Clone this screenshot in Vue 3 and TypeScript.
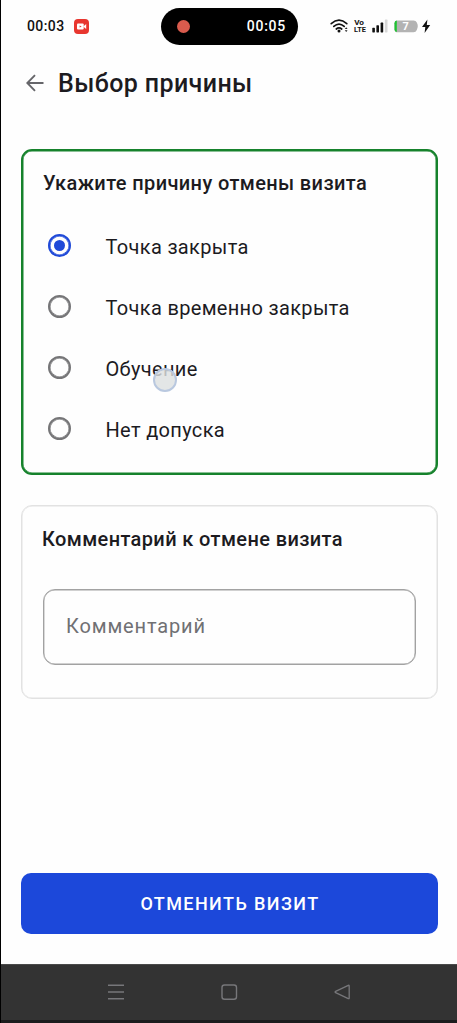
<script setup lang="ts">
import { ref } from 'vue'

const reasons: string[] = ['Точка закрыта', 'Точка временно закрыта', 'Обучение', 'Нет допуска']
const selected = ref<number>(0)
const comment = ref<string>('')
</script>

<template>
  <div class="phone">
    <header class="status">
      <span class="clock">00:03</span>
      <svg class="rec" width="15" height="15" viewBox="0 0 15 15">
        <rect width="15" height="15" rx="4" fill="#e8362f" />
        <rect x="3" y="4.5" width="6.7" height="6" rx="1" fill="#fff" />
        <path d="M9.3 7.5 12.2 5v5z" fill="#fff" />
        <path d="M5.6 6.4v2.2L7.6 7.5z" fill="#e8362f" />
      </svg>
      <div class="island">
        <i class="dot"></i>
        <span>00:05</span>
      </div>
      <svg class="system" width="103" height="18" viewBox="0 0 103 18">
        <g fill="none" stroke="#111" stroke-width="1.7" stroke-linecap="round">
          <path d="M1.2 6.6Q9 -0.2 16.8 6.6" />
          <path d="M3.8 9.4Q9 4.8 14.2 9.4" />
          <path d="M6.3 12Q9 9.7 11.7 12" />
        </g>
        <circle cx="9" cy="14" r="1.5" fill="#111" />
        <path d="M14.8 12.1l1.4-1.8 1.4 1.8zM14.8 13.2l1.4 1.8 1.4-1.8z" fill="#222" />
        <text x="24.2" y="7.6" class="volte" textLength="9.8" lengthAdjust="spacingAndGlyphs">Vo</text>
        <text x="24" y="15.3" class="volte" textLength="11.8" lengthAdjust="spacingAndGlyphs">LTE</text>
        <g fill="#111">
          <rect x="42.3" y="10.8" width="2.6" height="4.6" rx=".6" />
          <rect x="46.4" y="8.2" width="2.6" height="7.2" rx=".6" />
          <rect x="50.6" y="5.6" width="2.6" height="9.8" rx=".6" />
        </g>
        <rect x="54.9" y="2.6" width="2.6" height="12.8" rx=".6" fill="#d8d8d8" />
        <path d="M67.5 3.4H83.5Q86 3.4 86.8 5.6L87.6 7.6Q88 9.4 87.6 10.6L86.8 13Q86 15.2 83.5 15.2H67.5Q64.5 15.2 64.5 12.4V6.2Q64.5 3.4 67.5 3.4Z" fill="#b3b3b3" />
        <path d="M66.8 3.5V15.1Q64.5 14.7 64.5 12.4V6.2Q64.5 3.9 66.8 3.5Z" fill="#1fc332" />
        <text x="75.7" y="13.2" class="charge">7</text>
        <path d="M97.4 2.4 92 10H95.3L94.6 16 100.2 8H96.8Z" fill="#111" />
      </svg>
    </header>

    <div class="title">
      <svg width="18" height="18" viewBox="0 0 18 18" fill="none" stroke="#66666a" stroke-width="1.9">
        <path d="M17.5 9H1.5M9 1.2 1.3 9 9 16.8" />
      </svg>
      <h1>Выбор причины</h1>
    </div>

    <main>
      <section class="card reasons">
        <h2>Укажите причину отмены визита</h2>
        <ul>
          <li v-for="(reason, i) in reasons" :key="reason" @click="selected = i">
            <i class="radio" :class="{ on: selected === i }"></i>
            <span class="label">{{ reason }}</span>
          </li>
        </ul>
        <i class="touch"></i>
      </section>

      <section class="card note">
        <h2>Комментарий к отмене визита</h2>
        <input v-model="comment" type="text" placeholder="Комментарий" />
      </section>
    </main>

    <button class="submit">ОТМЕНИТЬ ВИЗИТ</button>

    <nav>
      <svg width="18" height="18" viewBox="0 0 18 18" stroke="#77777a" stroke-width="1.5">
        <path d="M1 2.2H17M1 9H17M1 15.8H17" />
      </svg>
      <svg width="18" height="18" viewBox="0 0 18 18" fill="none" stroke="#77777a" stroke-width="1.4">
        <rect x="2" y="2" width="14.5" height="14.2" rx="2.5" />
      </svg>
      <svg width="18" height="18" viewBox="0 0 18 18" fill="none" stroke="#77777a" stroke-width="1.3" stroke-linejoin="round">
        <path d="M15.3 2.3Q16.2 2 16.2 3V15Q16.2 16 15.3 15.6L2.6 9.7Q1.6 9 2.6 8.4Z" />
      </svg>
    </nav>
  </div>
</template>

<style>
body {
  margin: 0;
  background: #fff;
}
</style>

<style scoped>
* {
  box-sizing: border-box;
}
.phone {
  position: relative;
  display: flex;
  flex-direction: column;
  width: 457px;
  height: 1023px;
  background: linear-gradient(to right, #000 1px, #fefefe 1px);
  color: #1c1b1f;
  font-family: Roboto, "Liberation Sans", sans-serif;
  overflow: hidden;
}
.status {
  position: relative;
  display: flex;
  align-items: center;
  height: 52px;
  padding: 0 24px 0 27px;
  color: #111;
}
.clock {
  font-size: 14px;
  font-weight: 500;
  letter-spacing: 0.4px;
  width: 47px;
}
.island {
  display: flex;
  align-items: center;
  justify-content: space-between;
  width: 137px;
  height: 37px;
  margin-left: 72px;
  padding: 0 12px 0 16px;
  border-radius: 19px;
  background: #000;
  color: #fff;
  font-size: 14px;
  font-weight: 500;
  letter-spacing: 0.75px;
}
.dot {
  width: 13px;
  height: 13px;
  border-radius: 50%;
  background: #d95b4d;
}
.system {
  margin-left: auto;
  overflow: visible;
}
.volte {
  font-size: 7.6px;
  font-weight: 700;
  fill: #111;
}
.charge {
  font-size: 11px;
  font-weight: 700;
  fill: #fff;
  text-anchor: middle;
}
.title {
  display: flex;
  align-items: center;
  gap: 14px;
  height: 62px;
  padding-left: 26px;
}
h1,
h2 {
  margin: 0;
  font-weight: 500;
}
h1 {
  padding-top: 2px;
  font-size: 25px;
  line-height: 32px;
  letter-spacing: 0.4px;
}
main {
  display: flex;
  flex-direction: column;
  gap: 30px;
  padding: 35px 19px 0 21px;
}
.card {
  border-radius: 11px;
}
.reasons {
  position: relative;
  height: 326px;
  padding: 20px 20px 0 20px;
  border: 2px solid #16822c;
  box-shadow: inset 0 0 0 0.5px #16822c;
}
h2 {
  font-size: 20px;
  line-height: 24px;
  letter-spacing: 0.38px;
}
ul {
  margin: 20px 0 0;
  padding: 0;
  list-style: none;
}
li {
  display: flex;
  align-items: center;
  height: 61px;
  padding-left: 5px;
}
.radio {
  display: flex;
  align-items: center;
  justify-content: center;
  width: 23px;
  height: 23px;
  margin-right: 34.5px;
  border: 2px solid #757577;
  border-radius: 50%;
  box-shadow: inset 0 0 0 0.5px #757577;
}
.radio.on {
  border-color: #1f49d8;
  box-shadow: inset 0 0 0 0.5px #1f49d8;
}
.radio.on::after {
  content: "";
  width: 11px;
  height: 11px;
  flex: none;
  border-radius: 50%;
  background: #1f49d8;
}
.label {
  padding-top: 3px;
  font-size: 20px;
  line-height: 24px;
  letter-spacing: 0.33px;
}
.touch {
  position: absolute;
  left: 130px;
  top: 217px;
  width: 24px;
  height: 24px;
  border: 2px solid #b9c8df;
  border-radius: 50%;
  background: rgba(221, 224, 225, 0.82);
}
.note {
  height: 194px;
  padding: 21px 20px 0;
  border: 1px solid #e2e2e2;
  box-shadow: inset 0 0 0 0.5px #e2e2e2;
}
input {
  display: block;
  width: 373px;
  height: 76px;
  margin: 38px 0 0 1px;
  padding: 0 22px 3px;
  border: 1px solid #a2a2a2;
  box-shadow: inset 0 0 0 0.4px #a2a2a2;
  border-radius: 12px;
  background: transparent;
  font: 400 20px Roboto, "Liberation Sans", sans-serif;
  letter-spacing: 0.85px;
  outline: none;
}
input::placeholder {
  color: #707073;
  opacity: 1;
}
.submit {
  height: 61px;
  margin: 174px 19px 30px 21px;
  padding: 0 0 0 1px;
  border: 0;
  border-radius: 10px;
  background: #1c48da;
  color: #fff;
  font: 500 18px Roboto, "Liberation Sans", sans-serif;
  letter-spacing: 1.42px;
}
nav {
  display: flex;
  justify-content: space-between;
  height: 59px;
  margin-left: 1px;
  padding: 18px 106px 0;
  border-top: 1px solid #4a4a4a;
  border-bottom: 3px solid #1b1c1d;
  background: #333;
}
</style>
